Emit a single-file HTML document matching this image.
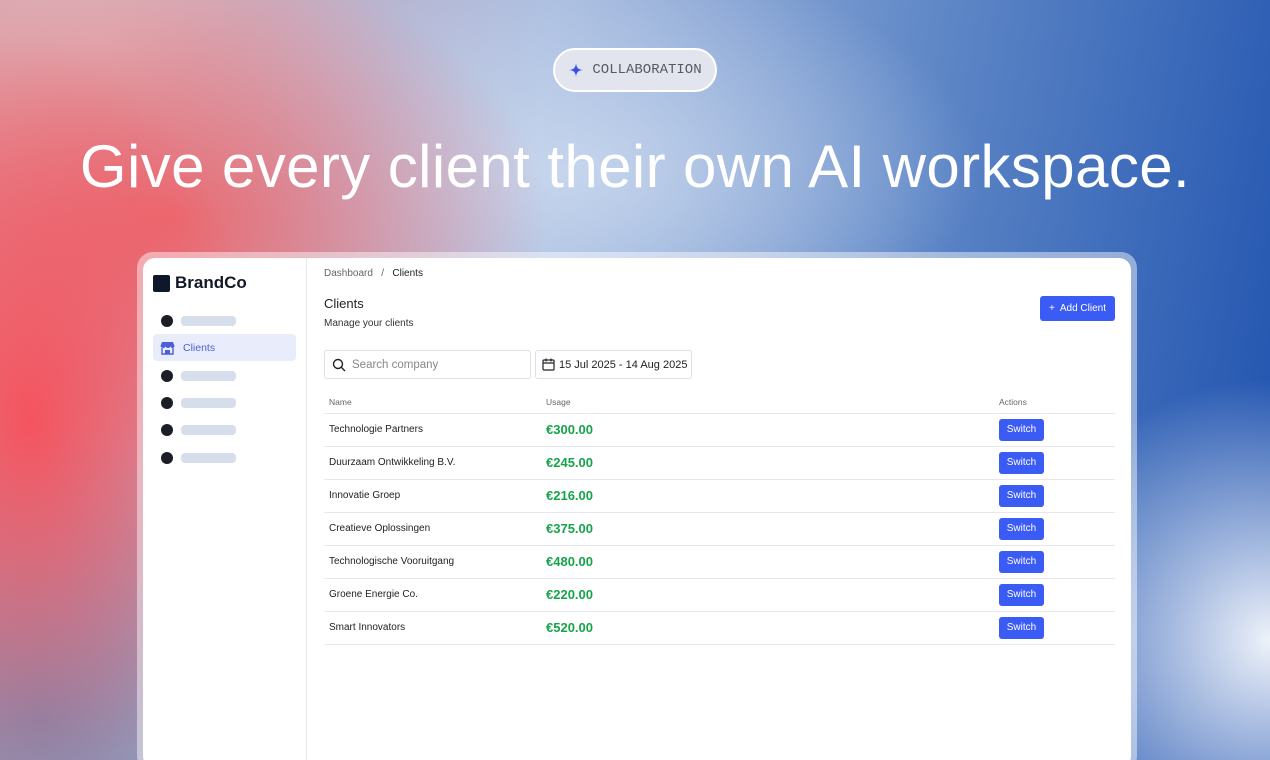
<!DOCTYPE html>
<html><head><meta charset="utf-8"><style>
*{margin:0;padding:0;box-sizing:border-box}
html,body{width:1270px;height:760px;overflow:hidden}
body{position:relative;font-family:"Liberation Sans",sans-serif;
background:
radial-gradient(ellipse 230px 380px at 30px 420px, rgba(246,80,90,0.95), rgba(246,80,90,0) 100%),
radial-gradient(ellipse 380px 260px at 170px 220px, rgba(238,100,105,0.9), rgba(238,100,105,0) 100%),
radial-gradient(ellipse 300px 200px at 100px 40px, rgba(225,190,195,0.8), rgba(225,190,195,0) 100%),
radial-gradient(ellipse 420px 220px at 560px 170px, rgba(200,215,238,0.95), rgba(200,215,238,0) 100%),
radial-gradient(ellipse 260px 260px at 1270px 640px, rgba(238,242,250,1), rgba(238,242,250,0) 100%),
radial-gradient(ellipse 320px 300px at 40px 720px, rgba(120,135,175,0.9), rgba(120,135,175,0) 100%),
linear-gradient(100deg,#d89aa6 0%,#a6bade 40%,#5d86c6 68%,#1d50ae 100%);}
.pill{position:absolute;left:553px;top:48px;width:164px;height:44px;border-radius:22px;background:#e2e5ee;border:2px solid #fff;display:flex;align-items:center;justify-content:center;gap:8px;font-family:"Liberation Mono",monospace;font-size:14px;color:#555a66}
h1{position:absolute;left:0;width:1270px;top:132px;text-align:center;color:#fff;font-size:60px;font-weight:400;letter-spacing:0.4px;white-space:nowrap}
.outer{position:absolute;left:137px;top:252px;width:1000px;height:520px;border-radius:16px;background:rgba(255,255,255,0.45)}
.card{position:absolute;left:143px;top:258px;width:988px;height:510px;border-radius:12px;background:#fff;overflow:hidden}
.side{position:absolute;left:0;top:0;width:164px;height:100%;border-right:1px solid #e6e8ee}
.logo{position:absolute;left:10px;top:15px;display:flex;align-items:center;gap:5px;font-size:17px;font-weight:700;color:#111827}
.logo i{width:17px;height:17px;background:#0f172a;border-radius:2px;display:block}
.nav{position:absolute;left:10px;width:143px;height:27px;display:flex;align-items:center;padding-left:8px;gap:8px}
.nav .d{width:12px;height:12px;border-radius:50%;background:#1b1e26}
.nav .b{width:55px;height:10px;border-radius:4px;background:#d6deeb}
.act{background:#e9edfb;border-radius:4px;color:#4a5fd8;font-size:10.5px;padding-left:7px}
.main{position:absolute;left:181px;top:0;right:16px}
.t{position:absolute;font-size:10px;color:#222}
.btn{background:#3b5bf5;color:#fff;border-radius:3px;font-size:10px;text-align:center}
.input{position:absolute;top:92px;height:29px;border:1px solid #dde1e8;border-radius:3px;display:flex;align-items:center;gap:6px;padding-left:7px;font-size:11.5px;white-space:nowrap}
table{position:absolute;top:133px;left:0;width:791px;border-collapse:collapse}
td,th{height:33px;font-size:10px;color:#222;font-weight:400;text-align:left;border-bottom:1px solid #e6e8ee;padding-left:5px;vertical-align:middle}
th{height:22px;font-size:8.5px;color:#666}
.m{color:#16a34a;font-weight:700;font-size:13px}
.sw{width:45px;height:22px;line-height:22px}
</style></head><body>
<div class="pill"><svg width="16" height="16" viewBox="0 0 16 16"><path d="M8 1 C8.6 6 10 7.4 15 8 C10 8.6 8.6 10 8 15 C7.4 10 6 8.6 1 8 C6 7.4 7.4 6 8 1Z" fill="#3b4ff0"/></svg>COLLABORATION</div>
<h1>Give every client their own AI workspace.</h1>
<div class="outer"></div>
<div class="card">
<div class="side">
<div class="logo"><i></i>BrandCo</div>
<div class="nav" style="top:49px"><span class="d"></span><span class="b"></span></div>
<div class="nav act" style="top:76px"><svg width="15" height="14" viewBox="0 0 15 14"><path d="M2 1h11l1.5 4c0 1-1 2-2 2s-2-1-2-2c0 1-1 2-2.5 2S5.5 6 5.5 5c0 1-1 2-2 2S.5 6 .5 5z" fill="#4a5fd8"/><path d="M2 7v6h11V7" stroke="#4a5fd8" stroke-width="1.4" fill="none"/><rect x="5" y="9" width="5" height="4" fill="#4a5fd8"/></svg>Clients</div>
<div class="nav" style="top:104px"><span class="d"></span><span class="b"></span></div>
<div class="nav" style="top:131px"><span class="d"></span><span class="b"></span></div>
<div class="nav" style="top:158px"><span class="d"></span><span class="b"></span></div>
<div class="nav" style="top:186px"><span class="d"></span><span class="b"></span></div>
</div>
<div class="main">
<div class="t" style="top:10px;color:#666">Dashboard &nbsp;&nbsp;/&nbsp;&nbsp; <span style="color:#222">Clients</span></div>
<div class="t" style="top:38px;font-size:13px">Clients</div>
<div class="t" style="top:60px;font-size:10px;color:#333">Manage your clients</div>
<div class="btn" style="position:absolute;right:0;top:38px;width:75px;height:25px;line-height:25px">+&nbsp; Add Client</div>
<div class="input" style="left:0;width:207px;color:#888"><svg width="14" height="14" viewBox="0 0 14 14"><circle cx="6" cy="6" r="4.5" stroke="#222" stroke-width="1.4" fill="none"/><path d="M9.3 9.3L13 13" stroke="#222" stroke-width="1.4"/></svg>Search company</div>
<div class="input" style="left:211px;width:157px;color:#222;gap:4px;font-size:11px;padding-left:6px"><svg width="13" height="13" viewBox="0 0 13 13"><rect x="1" y="2" width="11" height="10" rx="1" stroke="#222" stroke-width="1.2" fill="none"/><path d="M1 5h11M4 0.5v3M9 0.5v3" stroke="#222" stroke-width="1.2"/></svg>15 Jul 2025 - 14 Aug 2025</div>
<table>
<tr><th style="width:217px">Name</th><th style="width:453px">Usage</th><th>Actions</th></tr>
<tr><td>Technologie Partners</td><td class="m">€300.00</td><td><div class="btn sw">Switch</div></td></tr>
<tr><td>Duurzaam Ontwikkeling B.V.</td><td class="m">€245.00</td><td><div class="btn sw">Switch</div></td></tr>
<tr><td>Innovatie Groep</td><td class="m">€216.00</td><td><div class="btn sw">Switch</div></td></tr>
<tr><td>Creatieve Oplossingen</td><td class="m">€375.00</td><td><div class="btn sw">Switch</div></td></tr>
<tr><td>Technologische Vooruitgang</td><td class="m">€480.00</td><td><div class="btn sw">Switch</div></td></tr>
<tr><td>Groene Energie Co.</td><td class="m">€220.00</td><td><div class="btn sw">Switch</div></td></tr>
<tr><td>Smart Innovators</td><td class="m">€520.00</td><td><div class="btn sw">Switch</div></td></tr>
</table>
</div>
</div>
</body></html>
